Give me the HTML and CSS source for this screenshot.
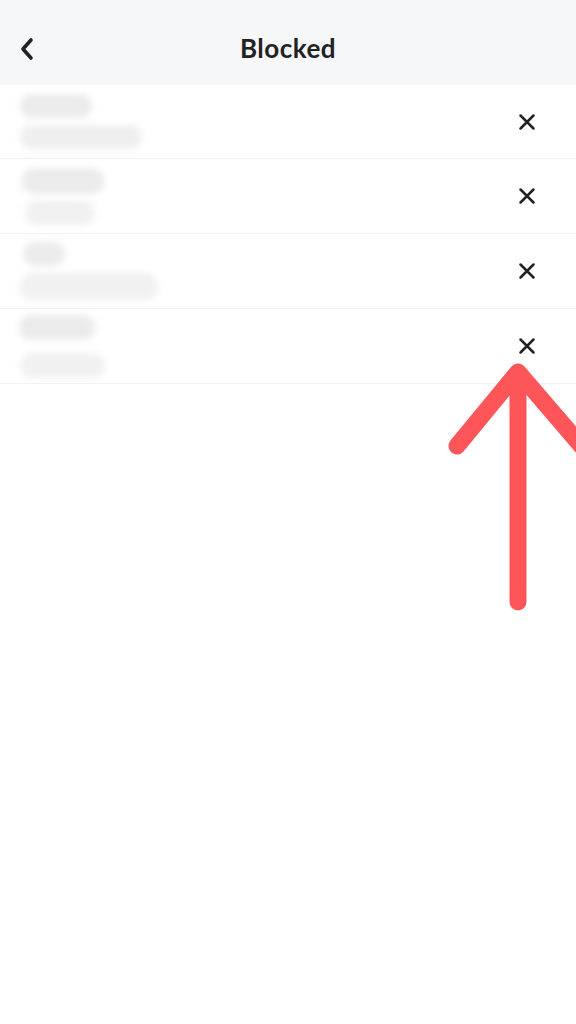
FILE: index.html
```html
<!DOCTYPE html>
<html>
<head>
<meta charset="utf-8">
<link rel="stylesheet" href="styles.css">
</head>
<body>
<div class="screen">
  <header class="header">
    <svg class="back" width="18" height="26" viewBox="0 0 18 26"><path d="M13 4 L5 13 L13 22" fill="none" stroke="#222" stroke-width="3.6" stroke-linecap="round" stroke-linejoin="round"/></svg>
    <h1 class="title">Blocked</h1>
  </header>
  <ul class="list">
    <li class="row r1">
      <div class="names"><span class="blob a"></span><span class="blob b"></span></div>
      <svg class="x" width="18" height="18" viewBox="0 0 18 18"><path d="M2.5 2.5 L15.5 15.5 M15.5 2.5 L2.5 15.5" stroke="#222" stroke-width="2.5" stroke-linecap="round"/></svg>
    </li>
    <li class="row r2">
      <div class="names"><span class="blob a"></span><span class="blob b"></span></div>
      <svg class="x" width="18" height="18" viewBox="0 0 18 18"><path d="M2.5 2.5 L15.5 15.5 M15.5 2.5 L2.5 15.5" stroke="#222" stroke-width="2.5" stroke-linecap="round"/></svg>
    </li>
    <li class="row r3">
      <div class="names"><span class="blob a"></span><span class="blob b"></span></div>
      <svg class="x" width="18" height="18" viewBox="0 0 18 18"><path d="M2.5 2.5 L15.5 15.5 M15.5 2.5 L2.5 15.5" stroke="#222" stroke-width="2.5" stroke-linecap="round"/></svg>
    </li>
    <li class="row r4">
      <div class="names"><span class="blob a"></span><span class="blob b"></span></div>
      <svg class="x" width="18" height="18" viewBox="0 0 18 18"><path d="M2.5 2.5 L15.5 15.5 M15.5 2.5 L2.5 15.5" stroke="#222" stroke-width="2.5" stroke-linecap="round"/></svg>
    </li>
  </ul>
  <svg class="arrow" width="576" height="1024" viewBox="0 0 576 1024">
    <g fill="none" stroke="#fd5558" stroke-width="17" stroke-linecap="round" stroke-linejoin="round">
      <path d="M518 376 L518 602"/>
      <path d="M457 446 L518 372 L590 456"/>
    </g>
  </svg>
</div>
</body>
</html>
```
FILE: styles.css
```css
* { box-sizing: border-box; }
html, body { margin: 0; padding: 0; background: #fff; }
body { font-family: "Lato", "Noto Sans", sans-serif; }
.screen { position: relative; width: 576px; height: 1024px; overflow: hidden; background: #fff; }
.header {
  height: 85px;
  background: #f6f7f9;
  display: flex;
  align-items: center;
  justify-content: center;
  position: relative;
  padding-top: 10px;
}
.back { position: absolute; left: 18px; top: 36px; }
.title { margin: 0; font-size: 26px; font-weight: 700; color: #222; letter-spacing: 0.5px; }
.list { list-style: none; margin: 0; padding: 0; }
.row {
  height: 75px;
  border-bottom: 1px solid #f1f1f3;
  display: flex;
  align-items: center;
  justify-content: space-between;
  padding: 0 40px 0 20px;
}
.row.r1 { height: 74px; }
.names { display: flex; flex-direction: column; gap: 7px; }
.blob {
  display: block;
  height: 24px;
  border-radius: 12px;
  background: #ebebec;
  filter: blur(3.5px);
}
.r1 .a { width: 72px; }
.r1 .b { width: 122px; background: #efeff0; }
.r2 .a { width: 82px; margin-left: 2px; height: 26px; }
.r2 .b { width: 70px; margin-left: 5px; background: #f0f0f1; }
.r3 .a { width: 42px; margin-left: 3px; }
.r3 .b { width: 138px; height: 27px; background: #f1f1f2; }
.r4 .a { width: 76px; margin-left: -1px; height: 25px; }
.r4 .b { width: 85px; height: 25px; margin-top: 6px; background: #f1f1f2; }
.x { flex: none; }
.arrow { position: absolute; left: 0; top: 0; pointer-events: none; }
```
